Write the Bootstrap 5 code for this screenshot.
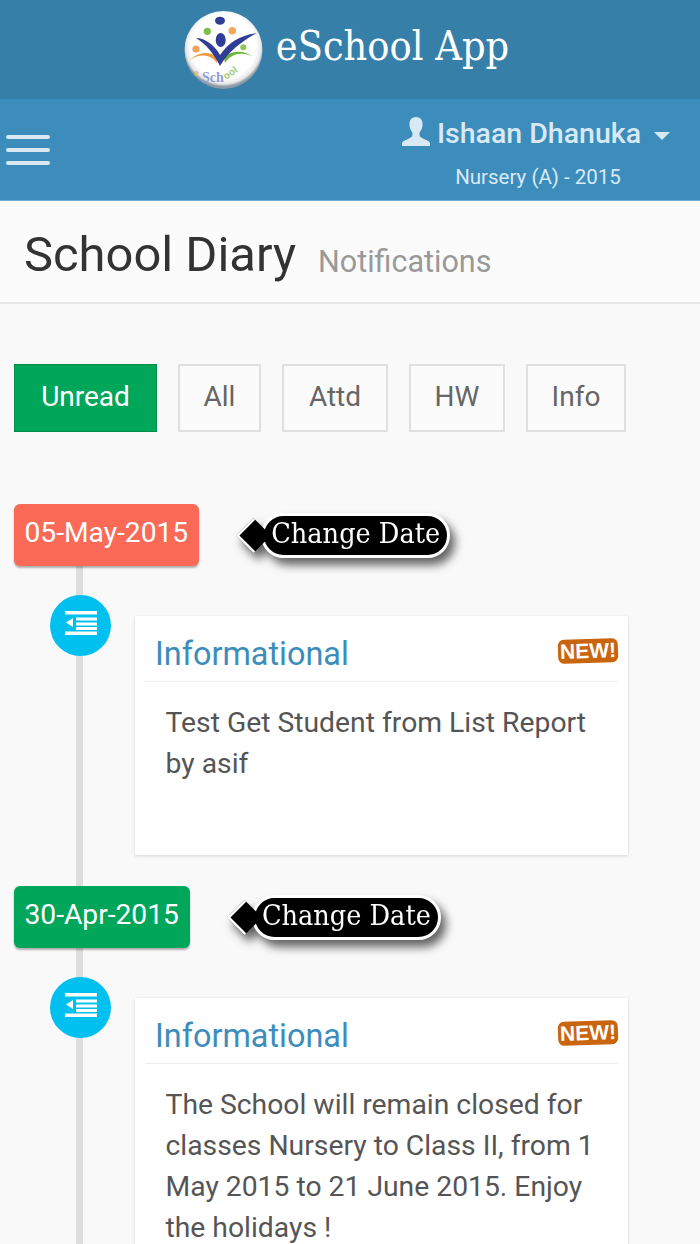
<!DOCTYPE html>
<html lang="en">
<head>
<meta charset="utf-8">
<title>eSchool App</title>
<link rel="stylesheet" href="https://cdn.jsdelivr.net/npm/bootstrap@5.3.0/dist/css/bootstrap.min.css">
<style>
body{background:#f9f9f9;font-family:Roboto,"Liberation Sans",sans-serif;color:#555}
.app-shell{height:100vh;overflow:hidden}
.app-brand{height:99px;background:#367fa9;color:#fff;font-family:"DejaVu Serif","Liberation Serif",serif;font-stretch:condensed;font-size:41px;padding-right:7px}
.brand-text{margin-top:-6px}
.app-bar{height:102px;background:#3c8dbc;border-bottom:1px solid #6fb0d8;color:#d9e9f4;padding:0 30px 0 6px}
.burger{width:44px;gap:9px}
.burger span{display:block;height:4px;border-radius:2px;background:#d9e9f4}
.user-name{font-size:28.5px;font-weight:500;line-height:36px;margin-top:18px;height:36px}
.user-icon{margin-right:7px}
.user-name-text{margin-top:-1px}
.user-caret{width:0;height:0;border-left:8px solid transparent;border-right:8px solid transparent;border-top:8px solid #d9e9f4;margin-left:13px;margin-top:15px}
.user-sub{font-size:20.5px;line-height:28px;margin-top:10px;padding-left:4px}
.page-head{height:103px;background:#fbfbfb;border-bottom:2px solid #e9e9e9;padding:8px 24px 0}
.page-title{font-size:48.9px;color:#333;margin:0;font-weight:400}
.page-sub{font-size:30.5px;color:#999;margin-left:22px;position:relative;top:6px}
.filters{gap:21px;padding:60px 14px 0}
.filter-btn{font-size:28px;height:68px;border:2px solid #e0e0e0;border-radius:0;background:#fbfbfb;color:#666;line-height:60px;padding:0 0 2px}
.filter-btn.is-on{background:#00a65a;border-color:#008d4c;color:#fff;border-width:1px;width:143px}
.filter-btn:nth-child(2){width:83px}
.filter-btn:nth-child(3){width:106px}
.filter-btn:nth-child(4){width:96px}
.filter-btn:nth-child(5){width:100px}
.tl{position:relative;padding:72px 14px 0}
.tl::before{content:"";position:absolute;left:76px;top:130px;bottom:0;width:7px;background:#ddd}
.tl-date{position:relative;height:62px;margin-bottom:50px}
.date-tag{font-size:28.2px;line-height:58px;color:#fff;border-radius:6px;padding:0 11px 4px 10.500px;box-shadow:0 2px 2px rgba(0,0,0,.3)}
.tag-red{background:#fa6a56}
.tag-green{background:#00a65a}
.tip{filter:drop-shadow(5px 7px 5px rgba(0,0,0,.6));position:relative;margin-left:62px}
.tip-body{position:relative;background:#000;color:#fff;border:3px solid #fff;border-radius:23px;height:45px;line-height:35px;font-family:"DejaVu Serif","Liberation Serif",serif;font-stretch:condensed;font-size:28.5px;padding:0 7px;white-space:nowrap}
.tip::before{content:"";position:absolute;z-index:1;left:-23px;top:7px;width:31px;height:31px;background:#000;border-left:3px solid #fff;border-bottom:3px solid #fff;transform:rotate(45deg) scale(.8)}
.tl-item{position:relative;margin:0 58px 31px 121px}
.tl-dot{position:absolute;left:-85px;top:-21px;width:61px;height:61px;border-radius:50%;background:#00c0ef;z-index:1;padding-bottom:6px}
.note{border:0;border-radius:0;box-shadow:0 1px 3px rgba(0,0,0,.15);background:#fff}
.note-head{height:66px;margin:0 10px;padding:19px 10px 0;border-bottom:1px solid #eee;font-size:32.4px;line-height:38px;color:#3c8dbc}
.note-text{font-size:28.3px;line-height:41px;padding:20px 31px 71px 30.500px;color:#555;margin:0}
.new-flag{position:absolute;right:10px;top:23px;width:60px;height:24px;border-radius:6px;background:#c9650f;color:#fff;font:700 21px/24px "Liberation Sans",sans-serif;text-align:center;transform:rotate(-2deg)}
</style>
</head>
<body>
<div class="app-shell">
  <header class="app-brand d-flex align-items-center justify-content-center">
    <svg width="80" height="80" viewBox="0 0 80 80" class="me-2 flex-shrink-0" role="img" aria-label="eSchool logo">
      <defs><radialGradient id="ball" cx="50%" cy="45%" r="52%"><stop offset="80%" stop-color="#fff"/><stop offset="93%" stop-color="#e8e8e8"/><stop offset="100%" stop-color="#8a9aa6"/></radialGradient></defs>
      <circle cx="39.5" cy="40" r="39" fill="url(#ball)"/>
      <ellipse cx="36" cy="10.7" rx="5" ry="4" fill="#2f3d96"/>
      <circle cx="23.3" cy="21.3" r="3.6" fill="#7fbf45"/>
      <circle cx="48.3" cy="20.7" r="3.8" fill="#f3a65c"/>
      <circle cx="12" cy="39" r="3.6" fill="#f3a05a"/>
      <circle cx="59.3" cy="37.3" r="3" fill="#8cc653"/>
      <ellipse cx="36.7" cy="30" rx="5" ry="7" fill="#2f3d96"/>
      <path d="M6 50C14 44 26 43 33 53L34 48C26 40 14 42 6 50Z" fill="#ef9a3c"/>
      <path d="M69 47C60 42 48 42 41 53L40 48C47 40 60 40 69 47Z" fill="#6fb53f"/>
      <path d="M12 28C20 28 30 34 36 45C44 33 56 25 73 23C58 31 44 42 36 56C30 44 22 34 12 28Z" fill="#2f3d96"/>
      <text x="10" y="66" font-family="Liberation Serif,serif" font-size="11" font-weight="700" fill="#e6b566">e</text>
      <text x="18" y="72" font-family="Liberation Serif,serif" font-size="14" font-weight="700" fill="#8f9fd8">Sch</text>
      <text x="42" y="70" font-family="Liberation Sans,sans-serif" font-size="10" font-weight="700" fill="#9ccb79" transform="rotate(-35 42 70)">ool</text>
    </svg>
    <span class="ms-1 brand-text">eSchool App</span>
  </header>

  <nav class="app-bar d-flex justify-content-between align-items-start">
    <div class="burger d-flex flex-column align-self-center"><span></span><span></span><span></span></div>
    <div>
      <div class="user-name d-flex align-items-start">
        <svg width="28" height="29" viewBox="0 0 29 30" class="user-icon" aria-hidden="true"><path fill="#d9e9f4" d="M14.5 0c4.4 0 6.8 3 6.8 7.6 0 3.4-1.3 6.4-3.1 8.4v3.2c0 1.4 2.2 2.5 5 3.8 2.8 1.2 5.3 2 5.8 4V30H0v-3c.5-2 3-2.800 5.800-4 2.800-1.300 5-2.400 5-3.800V16c-1.800-2-3.100-5-3.100-8.400C7.700 3 10.100 0 14.500 0z"/></svg>
        <span class="user-name-text">Ishaan Dhanuka</span><span class="user-caret"></span>
      </div>
      <div class="user-sub text-center">Nursery (A) - 2015</div>
    </div>
  </nav>

  <div class="page-head d-flex align-items-center">
    <h1 class="page-title">School Diary</h1><span class="page-sub">Notifications</span>
  </div>

  <div class="filters d-flex">
    <button type="button" class="btn filter-btn is-on">Unread</button>
    <button type="button" class="btn filter-btn">All</button>
    <button type="button" class="btn filter-btn">Attd</button>
    <button type="button" class="btn filter-btn">HW</button>
    <button type="button" class="btn filter-btn">Info</button>
  </div>

  <div class="tl">
    <div class="tl-date d-flex align-items-center">
      <span class="date-tag tag-red">05-May-2015</span>
      <div class="tip"><div class="tip-body">Change Date</div></div>
    </div>
    <div class="tl-item">
      <div class="tl-dot d-flex align-items-center justify-content-center">
        <svg width="32" height="24" viewBox="0 0 32 24" aria-hidden="true"><path fill="#fff" d="M0 0h32v3.500H0zM11 6.500h21v3H11zM11 11.500h21v3H11zM11 16h21v3H11zM0 20.500h32V24H0zM1 11.500l7-4.500v9z"/></svg>
      </div>
      <div class="card note">
        <span class="new-flag">NEW!</span>
        <div class="note-head">Informational</div>
        <p class="note-text">Test Get Student from List Report by asif</p>
      </div>
    </div>
    <div class="tl-date d-flex align-items-center">
      <span class="date-tag tag-green">30-Apr-2015</span>
      <div class="tip"><div class="tip-body">Change Date</div></div>
    </div>
    <div class="tl-item">
      <div class="tl-dot d-flex align-items-center justify-content-center">
        <svg width="32" height="24" viewBox="0 0 32 24" aria-hidden="true"><path fill="#fff" d="M0 0h32v3.500H0zM11 6.500h21v3H11zM11 11.500h21v3H11zM11 16h21v3H11zM0 20.500h32V24H0zM1 11.500l7-4.500v9z"/></svg>
      </div>
      <div class="card note">
        <span class="new-flag">NEW!</span>
        <div class="note-head">Informational</div>
        <p class="note-text">The School will remain closed for classes Nursery to Class II, from 1 May 2015 to 21 June 2015. Enjoy the holidays !</p>
      </div>
    </div>
  </div>
</div>
<script src="https://cdn.jsdelivr.net/npm/bootstrap@5.3.0/dist/js/bootstrap.bundle.min.js"></script>
</body>
</html>
